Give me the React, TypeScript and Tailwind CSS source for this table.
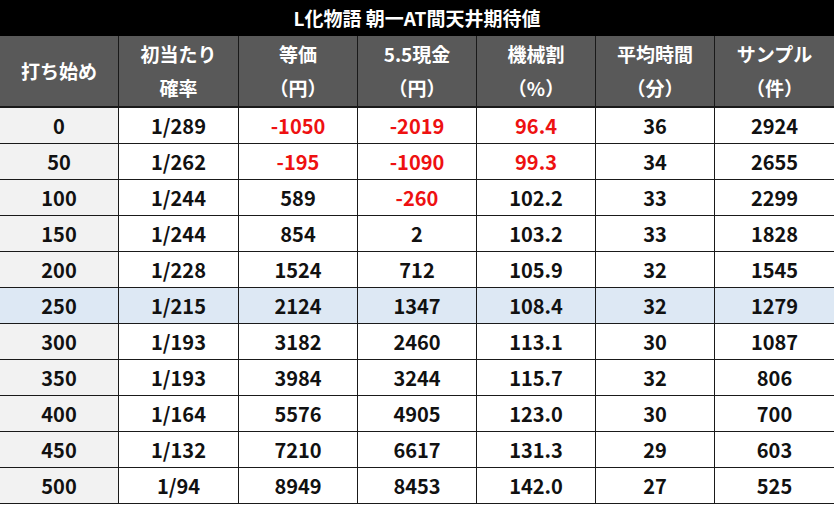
import React from "react";

type Row = { v: string[]; red: number[]; hl?: boolean };

const rows: Row[] = [
  { v: ["0", "1/289", "-1050", "-2019", "96.4", "36", "2924"], red: [2, 3, 4] },
  { v: ["50", "1/262", "-195", "-1090", "99.3", "34", "2655"], red: [2, 3, 4] },
  { v: ["100", "1/244", "589", "-260", "102.2", "33", "2299"], red: [3] },
  { v: ["150", "1/244", "854", "2", "103.2", "33", "1828"], red: [] },
  { v: ["200", "1/228", "1524", "712", "105.9", "32", "1545"], red: [] },
  { v: ["250", "1/215", "2124", "1347", "108.4", "32", "1279"], red: [], hl: true },
  { v: ["300", "1/193", "3182", "2460", "113.1", "30", "1087"], red: [] },
  { v: ["350", "1/193", "3984", "3244", "115.7", "32", "806"], red: [] },
  { v: ["400", "1/164", "5576", "4905", "123.0", "30", "700"], red: [] },
  { v: ["450", "1/132", "7210", "6617", "131.3", "29", "603"], red: [] },
  { v: ["500", "1/94", "8949", "8453", "142.0", "27", "525"], red: [] },
];

const headers: string[][] = [
  ["打ち始め"],
  ["初当たり", "確率"],
  ["等価", "（円）"],
  ["5.5現金", "（円）"],
  ["機械割", "（%）"],
  ["平均時間", "（分）"],
  ["サンプル", "（件）"],
];

const font = {
  fontFamily: '"Noto Sans CJK JP", "Noto Sans", sans-serif',
};

export default function App() {
  return (
    <div className="w-[834px] h-[505px] bg-white" style={font}>
      <div className="h-[36px] bg-black text-white font-bold text-[19px] flex items-center justify-center">
        L化物語 朝一AT間天井期待値
      </div>
      <div className="grid grid-cols-[119px_120px_119px_119px_119px_119px_119px] border-r border-[#1a1a1a] w-[834px]">
        {headers.map((h, i) => (
          <div
            key={i}
            className={`h-[72px] bg-[#595959] text-white font-bold text-[19px] flex flex-col items-center justify-center border-b-2 border-[#1a1a1a] ${
              i < 6 ? "border-r" : ""
            }`}
          >
            {h.map((t, j) => (
              <div key={j} className="h-[34px] leading-[34px]">
                {t}
              </div>
            ))}
          </div>
        ))}
        {rows.map((r, ri) =>
          r.v.map((c, ci) => (
            <div
              key={`${ri}-${ci}`}
              className={`h-[36px] flex items-center justify-center font-bold text-[20px] border-b border-[#1a1a1a] ${
                ci < 6 ? "border-r" : ""
              } ${
                r.hl ? "bg-[#dde8f4]" : ci === 0 ? "bg-[#f2f2f2]" : "bg-white"
              } ${r.red.includes(ci) ? "text-[#ee1111]" : "text-[#111111]"} ${
                ri === 0 ? "h-[35px]" : ""
              }`}
            >
              {c}
            </div>
          ))
        )}
      </div>
    </div>
  );
}
